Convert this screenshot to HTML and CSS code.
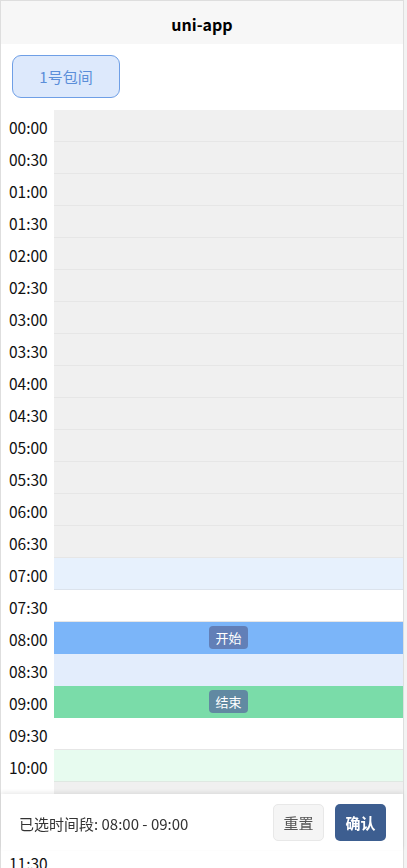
FILE: index.html
```html
<!DOCTYPE html>
<html lang="zh-CN">
<head>
    <meta charset="UTF-8">
    <title>uni-app</title>
    <link rel="stylesheet" href="styles.css">
</head>
<body>
    <div class="page">
        <div class="nav-bar">uni-app</div>
        <div class="room-tabs">
            <div class="room-tab active">1号包间</div>
        </div>
        <div class="timeline">
            <div class="row"><span class="time">00:00</span><div class="slot disabled"></div></div>
            <div class="row"><span class="time">00:30</span><div class="slot disabled"></div></div>
            <div class="row"><span class="time">01:00</span><div class="slot disabled"></div></div>
            <div class="row"><span class="time">01:30</span><div class="slot disabled"></div></div>
            <div class="row"><span class="time">02:00</span><div class="slot disabled"></div></div>
            <div class="row"><span class="time">02:30</span><div class="slot disabled"></div></div>
            <div class="row"><span class="time">03:00</span><div class="slot disabled"></div></div>
            <div class="row"><span class="time">03:30</span><div class="slot disabled"></div></div>
            <div class="row"><span class="time">04:00</span><div class="slot disabled"></div></div>
            <div class="row"><span class="time">04:30</span><div class="slot disabled"></div></div>
            <div class="row"><span class="time">05:00</span><div class="slot disabled"></div></div>
            <div class="row"><span class="time">05:30</span><div class="slot disabled"></div></div>
            <div class="row"><span class="time">06:00</span><div class="slot disabled"></div></div>
            <div class="row"><span class="time">06:30</span><div class="slot disabled"></div></div>
            <div class="row"><span class="time">07:00</span><div class="slot booked"></div></div>
            <div class="row"><span class="time">07:30</span><div class="slot"></div></div>
            <div class="row"><span class="time">08:00</span><div class="slot start"><span class="tag">开始</span></div></div>
            <div class="row"><span class="time">08:30</span><div class="slot between"></div></div>
            <div class="row"><span class="time">09:00</span><div class="slot end"><span class="tag">结束</span></div></div>
            <div class="row"><span class="time">09:30</span><div class="slot"></div></div>
            <div class="row"><span class="time">10:00</span><div class="slot free"></div></div>
            <div class="row"><span class="time">10:30</span><div class="slot disabled"></div></div>
            <div class="row"><span class="time">11:00</span><div class="slot disabled"></div></div>
            <div class="row"><span class="time">11:30</span><div class="slot"></div></div>
        </div>
        <div class="footer">
            <span class="picked">已选时间段: 08:00 - 09:00</span>
            <div class="actions">
                <button class="btn-reset">重置</button>
                <button class="btn-ok">确认</button>
            </div>
        </div>
    </div>
</body>
</html>
```

FILE: styles.css
```css
*{
    padding:0;margin: 0;
    box-sizing: border-box;
}
body{
    background-color: #f3f3f3;
    font-family: "Noto Sans CJK SC", "Noto Sans", sans-serif;
    color: #111;
}
.page{
    width: 404px;
    min-height: 868px;
    background-color: #fff;
    border: 1px solid #dedede;
    border-bottom: none;
}
.nav-bar{
    height: 43px;
    line-height: 46px;
    text-align: center;
    font-size: 16px;
    font-weight: bold;
    color: #000;
    background-color: #f7f7f7;
}
.room-tabs{
    display: flex;
    height: 66px;
    padding: 11px 11px 0;
}
.room-tab{
    width: 108px;
    height: 43px;
    line-height: 41px;
    text-align: center;
    font-size: 15px;
    color: #5b8ed9;
    background-color: #dde9fc;
    border: 1px solid #6f9fe6;
    border-radius: 9px;
}
.timeline{
    display: flex;
    flex-direction: column;
}
.row{
    display: flex;
    height: 32px;
}
.time{
    width: 53px;
    padding-left: 8px;
    line-height: 34px;
    font-size: 15.5px;
    color: #111;
}
.slot{
    flex: 1;
    display: flex;
    align-items: center;
    justify-content: center;
    background-color: #fff;
    border-bottom: 1px solid #e6e6e6;
}
.slot.disabled{background-color: #f0f0f0;}
.slot.booked{background-color: #e7f1fd;border-bottom-color: #dce3ec;}
.slot.start{background-color: #7bb5f9;border-bottom-color: #7bb5f9;}
.slot.between{background-color: #e3edfc;border-bottom-color: #e3edfc;}
.slot.end{background-color: #7adca9;border-bottom-color: #7adca9;}
.slot.free{background-color: #e7fbef;border-bottom-color: #dfe8e2;}
.tag{
    padding: 2px 6px;
    font-size: 13px;
    line-height: 19px;
    color: #fff;
    background-color: rgba(90, 110, 160, 0.75);
    border-radius: 4px;
}
/* 底部操作栏，悬浮在时间轴上面 */
.footer{
    position: fixed;
    left: 1px;
    top: 794px;
    width: 402px;
    height: 56px;
    display: flex;
    align-items: center;
    justify-content: space-between;
    padding: 0 17px 0 18px;
    background-color: #fff;
    box-shadow: 0 -2px 4px rgba(0,0,0,0.08);
}
.picked{
    font-size: 15px;
    color: #333;
    padding-top: 3px;
}
.actions{
    display: flex;
    gap: 11px;
}
.actions button{
    width: 51px;
    height: 37px;
    font-family: "Noto Sans CJK SC", sans-serif;
    font-size: 15px;
    border-radius: 5px;
    cursor: pointer;
}
.btn-reset{
    color: #555;
    background-color: #f5f5f5;
    border: 1px solid #e8e8e8;
}
.btn-ok{
    color: #fff;
    font-weight: bold;
    background-color: #3d5e90;
    border: none;
}
```
